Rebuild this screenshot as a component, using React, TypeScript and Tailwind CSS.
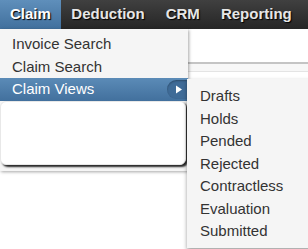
import React from 'react';

const navItems = ['Claim', 'Deduction', 'CRM', 'Reporting'];
const claimItems = ['Invoice Search', 'Claim Search'];
const views = ['Drafts', 'Holds', 'Pended', 'Rejected', 'Contractless', 'Evaluation', 'Submitted'];

export default function App() {
  return (
    <div className="relative w-[308px] h-[249px] overflow-hidden bg-white font-['Liberation_Sans',Arial,sans-serif]">
      {/* top nav */}
      <div className="flex h-[29px] bg-gradient-to-b from-[#404040] to-[#262626]">
        {navItems.map((item, i) => (
          <div
            key={item}
            className={
              i === 0
                ? 'flex items-center px-[10px] bg-gradient-to-b from-[#5f8fbb] to-[#41709d] text-white text-[15px] font-bold [text-shadow:1px_1px_1px_#000]'
                : 'flex items-center px-[10.5px] text-[#e6e6e6] text-[15px] font-bold [text-shadow:1px_1px_1px_#000]'
            }
          >
            {item}
          </div>
        ))}
      </div>

      {/* page behind */}
      <div className="h-[33px] bg-white" />
      <div className="h-[2px] bg-[#c4c4c4]" />
      <div className="h-[8px] bg-[#f7f7f7] border-b border-[#e4e4e4]" />

      {/* claim dropdown */}
      <div className="absolute top-[29px] left-0 w-[188px] bg-[#f5f5f5] pt-[3px] shadow-[1px_1px_3px_rgba(0,0,0,0.35)]">
        {claimItems.map(item => (
          <div key={item} className="h-[23px] leading-[23px] pl-[12px] text-[15px] text-[#333]">
            {item}
          </div>
        ))}
        <div className="relative flex items-center h-[23px] pl-[12px] bg-gradient-to-b from-[#5b8bb7] to-[#42709d] text-[15px] text-white">
          Claim Views
          <div className="absolute right-0 top-[2px] flex items-center justify-center w-[21px] h-[19px] rounded-l-full bg-[#3f6b97] shadow-[inset_0_1px_2px_rgba(0,0,0,0.3)]">
            <svg width="8" height="9" viewBox="0 0 8 9" className="ml-[3px]">
              <path d="M1 0.5 L7 4.5 L1 8.5 Z" fill="#fff" />
            </svg>
          </div>
        </div>
        <div className="h-[64px] w-[186px] bg-white rounded-[6px] border border-[#e8e8e8] shadow-[2px_2px_2px_rgba(0,0,0,0.85)]" />
        <div className="h-[6px]" />
      </div>

      {/* claim views submenu */}
      <div className="absolute top-[79px] left-[187px] w-[130px] bg-[#f5f5f5] pt-[6px] pb-[5px] shadow-[0_2px_4px_rgba(0,0,0,0.4)]">
        {views.map(v => (
          <div key={v} className="h-[22.5px] leading-[22.5px] pl-[13px] text-[15px] text-[#333]">
            {v}
          </div>
        ))}
      </div>
    </div>
  );
}
